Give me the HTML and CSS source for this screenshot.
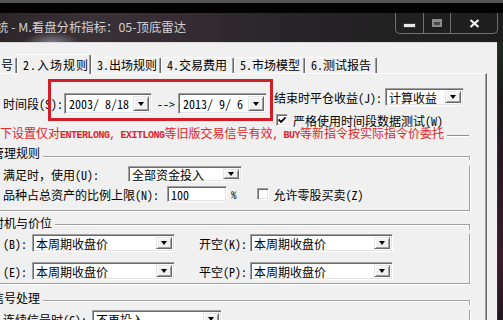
FILE: index.html
```html
<!DOCTYPE html>
<html lang="zh-CN">
<head>
    <meta charset="UTF-8">
    <meta name="viewport" content="width=device-width, initial-scale=1.0">
    <title>测试设置 - 入场规则</title>
    <link rel="stylesheet" href="styles.css">
</head>
<body>
    <div class="screen">
        <div class="edge-top"></div>
        <div class="frame-top"></div>
        <div class="titlebar">
            <div class="title">统 - M.看盘分析指标：05-顶底雷达</div>
            <div class="caption-btns">
                <span class="cb cb-min"><i class="icon-min"></i></span>
                <span class="cb cb-max"><i class="icon-max"></i></span>
                <span class="cb cb-close">
                    <svg width="11" height="9" viewBox="0 0 11 9"><path d="M1.5 1 L9.5 8 M9.5 1 L1.5 8" stroke="#f2f2f2" stroke-width="2.2" fill="none"/></svg>
                </span>
            </div>
        </div>

        <div class="main">
            <div class="client">
                <div class="tabs">
                    <span class="tab tab-cut">号</span>
                    <span class="tab active w74">2.入场规则</span>
                    <span class="tab w70">3.出场规则</span>
                    <span class="tab w73">4.交易费用</span>
                    <span class="tab w71">5.市场模型</span>
                    <span class="tab w72">6.测试报告</span>
                </div>

                <div class="panel">
                    <div class="row-time">
                        <div class="time-left">
                            <span class="lbl w64">时间段(S):</span>
                            <div class="field combo date w88">
                                <span class="val">2003/ 8/18</span>
                                <span class="drop"><i class="arrow"></i></span>
                            </div>
                            <span class="to">--&gt;</span>
                            <div class="field combo date w89">
                                <span class="val">2013/ 9/ 6</span>
                                <span class="drop"><i class="arrow"></i></span>
                            </div>
                        </div>
                        <div class="time-right">
                            <div class="end-row">
                                <span class="lbl w111">结束时平仓收益(J):</span>
                                <div class="field combo w79">
                                    <span class="val">计算收益</span>
                                    <span class="drop"><i class="arrow"></i></span>
                                </div>
                            </div>
                            <div class="check-row">
                                <span class="check">
                                    <svg width="8" height="8" viewBox="0 0 8 8"><path d="M0.5 3.5 L3 6 L7.5 1.5" stroke="#000" stroke-width="1.8" fill="none"/></svg>
                                </span>
                                <span>严格使用时间段数据测试(W)</span>
                            </div>
                        </div>
                    </div>

                    <div class="note">
                        <span>下设置仅对<span class="latin">ENTERLONG, EXITLONG</span>等旧版交易信号有效<span class="latin">, BUY</span>等新指令按实际指令价委托</span>
                    </div>

                    <div class="group g-manage">
                        <div class="group-head"><span class="group-title">管理规则</span></div>
                        <div class="group-body">
                            <div class="g-row h16 mt6">
                                <span class="lbl w128">满足时，使用(U):</span>
                                <div class="field combo w114">
                                    <span class="val">全部资金投入</span>
                                    <span class="drop"><i class="arrow"></i></span>
                                </div>
                            </div>
                            <div class="g-row h16 mt4">
                                <span class="lbl w167">品种占总资产的比例上限(N):</span>
                                <div class="field w60"><span class="val">100</span></div>
                                <span class="pct">%</span>
                                <span class="check ml20"></span>
                                <span class="check-text">允许零股买卖(Z)</span>
                            </div>
                        </div>
                    </div>

                    <div class="group g-timing">
                        <div class="group-head"><span class="group-title">时机与价位</span></div>
                        <div class="group-body">
                            <div class="g-row h18 mt4">
                                <span class="lbl w32">(B):</span>
                                <div class="field combo w143">
                                    <span class="val">本周期收盘价</span>
                                    <span class="drop"><i class="arrow"></i></span>
                                </div>
                                <span class="lbl w51 ml24">开空(K):</span>
                                <div class="field combo w143">
                                    <span class="val">本周期收盘价</span>
                                    <span class="drop"><i class="arrow"></i></span>
                                </div>
                            </div>
                            <div class="g-row h18 mt10">
                                <span class="lbl w32">(E):</span>
                                <div class="field combo w143">
                                    <span class="val">本周期收盘价</span>
                                    <span class="drop"><i class="arrow"></i></span>
                                </div>
                                <span class="lbl w51 ml24">平空(P):</span>
                                <div class="field combo w143">
                                    <span class="val">本周期收盘价</span>
                                    <span class="drop"><i class="arrow"></i></span>
                                </div>
                            </div>
                        </div>
                    </div>

                    <div class="group g-signal">
                        <div class="group-head"><span class="group-title">信号处理</span></div>
                        <div class="group-body">
                            <div class="g-row h18 mt5">
                                <span class="lbl w92">连续信号时(C):</span>
                                <div class="field combo w130">
                                    <span class="val">不再投入</span>
                                    <span class="drop"><i class="arrow"></i></span>
                                </div>
                            </div>
                        </div>
                    </div>
                </div>
            </div>
            <div class="frame-right"></div>
        </div>

        <div class="mark"></div>
    </div>
</body>
</html>
```

FILE: styles.css
```css
body {
    margin: 0;
    background: #111;
    font-family: "Noto Sans Mono CJK SC", "Noto Sans CJK SC", sans-serif;
    font-size: 12px;
    color: #000;
}
.screen {
    position: relative;
    width: 503px;
    height: 320px;
    overflow: hidden;
}

/* window chrome */
.edge-top {
    height: 3px;
    background: #575757;
}
.frame-top {
    height: 10px;
    background: #030303;
}
.titlebar {
    height: 29px;
    display: flex;
    justify-content: space-between;
    align-items: flex-start;
    background:
        radial-gradient(ellipse 28px 10px at 52px 29px, rgba(215, 220, 235, 0.45), rgba(215, 220, 235, 0) 100%),
        linear-gradient(to right, #2c2629 0%, #3a3037 18%, #362d34 35%, #262426 60%, #1d1d1d 100%);
}
.title {
    margin-left: -4px;
    font-family: "Noto Sans CJK SC", sans-serif;
    font-size: 12.4px;
    line-height: 29px;
    color: #d2d2d2;
    white-space: nowrap;
}
.caption-btns {
    display: flex;
    height: 20px;
    margin-right: 5px;
    border: 1px solid #707070;
    border-top: none;
    border-radius: 0 0 5px 5px;
}
.cb {
    display: flex;
    justify-content: center;
    align-items: flex-start;
}
.cb-min {
    width: 27px;
    border-right: 1px solid #707070;
}
.cb-max {
    width: 26px;
    border-right: 1px solid #707070;
}
.cb-close {
    width: 46px;
    padding-top: 6px;
    box-sizing: border-box;
}
.icon-min {
    display: block;
    width: 11px;
    height: 3px;
    margin-top: 11px;
    background: #e8e8e8;
    box-shadow: 0 0 0 1px #3a3a3a;
}
.icon-max {
    display: block;
    width: 10px;
    height: 8px;
    margin-top: 6px;
    box-sizing: border-box;
    border: 2px solid #8c8c8c;
    border-top-width: 3px;
    background: #4a4a4a;
}

.main {
    display: flex;
    height: 278px;
}
.client {
    width: 497px;
    background: #f0f0f0;
    border-top: 1px solid #d9d9d9;
    box-sizing: border-box;
    overflow: hidden;
}
.frame-right {
    flex: 1;
    border-left: 1px solid #303030;
    background: linear-gradient(#1f2a22 0%, #1a1a1a 20%, #2b1822 50%, #3a1c2a 80%, #22151b 100%);
}

/* tabs */
.tabs {
    position: relative;
    z-index: 1;
    display: flex;
    align-items: flex-end;
    height: 30px;
}
.tab {
    box-sizing: border-box;
    height: 16px;
    padding-left: 5px;
    border-top: 1px solid #fff;
    border-left: 1px solid #fff;
    border-right: 1px solid #696969;
    border-radius: 2px 2px 0 0;
    box-shadow: inset -1px 0 0 #a0a0a0;
    line-height: 14px;
    white-space: nowrap;
    background: #f0f0f0;
}
.tab-cut {
    width: 17px;
    padding-left: 1px;
    border-left: none;
}
.tab.active {
    height: 20px;
    margin-bottom: -1px;
    padding-top: 3px;
    padding-left: 5px;
    letter-spacing: 1px;
}
.w70 { width: 70px; }
.w71 { width: 71px; }
.w72 { width: 72px; }
.w73 { width: 73px; }
.w74 { width: 74px; }

/* panel */
.panel {
    width: 487px;
    height: 300px;
    box-sizing: border-box;
    border-top: 1px solid #fff;
    border-right: 1px solid #696969;
    box-shadow: inset -1px 0 0 #a0a0a0;
}
.lbl {
    flex: none;
    box-sizing: border-box;
    padding-left: 3px;
    white-space: nowrap;
}
.w32 { width: 32px; }
.w51 { width: 51px; padding-left: 0; }
.w60 { width: 60px; }
.w64 { width: 64px; }
.w79 { width: 79px; }
.w88 { width: 88px; }
.w89 { width: 89px; }
.w92 { width: 92px; }
.w111 { width: 111px; padding-left: 0; }
.w114 { width: 114px; }
.w128 { width: 128px; }
.w130 { width: 130px; }
.w143 { width: 143px; }
.w167 { width: 167px; }
.ml20 { margin-left: 20px; }
.ml24 { margin-left: 24px; }
.mt4 { margin-top: 4px; }
.mt5 { margin-top: 5px; }
.mt6 { margin-top: 6px; }
.mt10 { margin-top: 10px; }
.h16 { height: 16px; }
.h18 { height: 18px; }

/* sunken edit / combo */
.field {
    flex: none;
    display: flex;
    align-items: center;
    box-sizing: border-box;
    height: 100%;
    padding: 2px;
    border: 1px solid;
    border-color: #a0a0a0 #fff #fff #a0a0a0;
    box-shadow: inset 1px 1px 0 #696969, inset -1px -1px 0 #e3e3e3;
    background: #fff;
}
.field .val {
    flex: 1;
    padding-left: 1px;
    white-space: nowrap;
    overflow: hidden;
}
.drop {
    display: flex;
    justify-content: center;
    align-items: center;
    width: 16px;
    align-self: stretch;
    box-sizing: border-box;
    border: 1px solid;
    border-color: #e3e3e3 #696969 #696969 #e3e3e3;
    box-shadow: inset 1px 1px 0 #fff, inset -1px -1px 0 #a0a0a0;
    background: #f0f0f0;
}
.arrow {
    width: 0;
    height: 0;
    border-left: 3.5px solid transparent;
    border-right: 3.5px solid transparent;
    border-top: 4px solid #000;
}

/* first row */
.row-time {
    display: flex;
    height: 52px;
}
.time-left {
    display: flex;
    align-items: center;
    width: 274px;
    height: 21px;
    margin-top: 19px;
}
.date {
    height: 21px;
    padding-left: 3px;
}
.to {
    width: 18px;
    margin: 0 3px 0 5px;
}
.time-right {
    display: flex;
    flex-direction: column;
}
.end-row {
    display: flex;
    align-items: center;
    height: 18px;
    margin-top: 14px;
}
.check-row {
    display: flex;
    align-items: center;
    gap: 5px;
    height: 12px;
    margin-top: 8px;
    padding-left: 2px;
}
.check {
    flex: none;
    display: flex;
    justify-content: center;
    align-items: center;
    width: 12px;
    height: 12px;
    box-sizing: border-box;
    border: 1px solid;
    border-color: #a0a0a0 #fff #fff #a0a0a0;
    box-shadow: inset 1px 1px 0 #696969, inset -1px -1px 0 #e3e3e3;
    background: #fff;
}
.check-text {
    margin-left: 5px;
    white-space: nowrap;
}
.pct {
    margin-left: 4px;
    font-size: 11px;
}

/* red note with trailing rule */
.note {
    display: flex;
    width: 469px;
    height: 14px;
    line-height: 14px;
    color: #e0242b;
    white-space: nowrap;
}
.note .latin {
    font-family: "Liberation Mono", monospace;
    font-size: 10px;
    font-weight: bold;
    letter-spacing: -0.5px;
}
.note::after {
    content: "";
    flex: 1;
    align-self: flex-end;
    margin: 0 0 3px 3px;
    border-top: 1px solid #8f8f8f;
    border-bottom: 1px solid #fff;
}

/* group boxes: title + etched rule, right and bottom edges */
.group {
    margin-right: 16px;
}
.g-manage { margin-top: 6px; }
.g-timing { margin-top: 5px; }
.g-signal { margin-top: 7px; }
.group-head {
    display: flex;
    height: 14px;
    line-height: 14px;
}
.group-title {
    margin-left: -8px;
    padding-right: 3px;
    white-space: nowrap;
}
.group-head::after {
    content: "";
    flex: 1;
    align-self: flex-end;
    height: 4px;
    box-sizing: border-box;
    border-top: 1px solid #a0a0a0;
    border-right: 1px solid #a0a0a0;
    box-shadow: inset 0 1px 0 #fff, 1px 0 0 #fff;
}
.g-timing .group-head::after { height: 6px; }
.g-signal .group-head::after { height: 5px; }
.group-body {
    padding-bottom: 8px;
    border-right: 1px solid #a0a0a0;
    border-bottom: 1px solid #a0a0a0;
    box-shadow: 1px 1px 0 #fff;
}
.g-timing .group-body { padding-bottom: 3px; }
.g-row {
    display: flex;
    align-items: center;
}

/* red annotation frame drawn over the dialog */
.mark {
    position: absolute;
    left: 48px;
    top: 79px;
    width: 225px;
    height: 42px;
    box-sizing: border-box;
    border: 3px solid #d21e26;
}
```
